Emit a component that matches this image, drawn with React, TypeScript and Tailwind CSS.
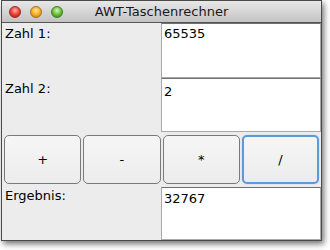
import React from "react";

const font = { fontFamily: '"DejaVu Sans", "Liberation Sans", sans-serif' };

function Light({ cls }: { cls: string }) {
  return <div className={`w-[12px] h-[12px] rounded-full border ${cls}`} />;
}

function Field({ value, pt }: { value: string; pt: string }) {
  return (
    <div
      className={`h-full bg-white border border-[#a9a9a9] border-t-[#707070] pl-[2px] ${pt} text-[13px] leading-[16px] text-black`}
    >
      {value}
    </div>
  );
}

function Btn({ label, focus }: { label: string; focus?: boolean }) {
  return (
    <div className="h-full px-[1px] py-[2px]">
      <div
        className={
          focus
            ? "h-full rounded-[5px] border-2 border-[#5f98dc] bg-gradient-to-b from-[#f6f6f6] to-[#ececec] flex items-center justify-center text-[13px] text-black shadow-[0_0_1px_#8ab4ea]"
            : "h-full rounded-[5px] border border-[#7a7a7a] bg-gradient-to-b from-[#f6f6f6] to-[#ececec] flex items-center justify-center text-[13px] text-black"
        }
      >
        {label}
      </div>
    </div>
  );
}

export default function App() {
  return (
    <div className="w-[330px] h-[250px] bg-white" style={font}>
      <div className="ml-[1px] w-[321px] h-[241px] border border-[#4a4a4a] bg-[#ececec] flex flex-col shadow-[2px_3px_6px_rgba(0,0,0,0.55)]">
        <div className="h-[22px] shrink-0 bg-gradient-to-b from-[#e8e8e8] to-[#c3c3c3] border-b border-[#555] flex items-center relative">
          <div className="flex items-center gap-[9px] pl-[7px]">
            <Light cls="border-[#9c2b22] bg-[radial-gradient(circle_at_50%_35%,#ffb0a4,#e8392d_55%,#a3150d)]" />
            <Light cls="border-[#a7701a] bg-[radial-gradient(circle_at_50%_35%,#ffe39a,#f3aa1f_55%,#b87408)]" />
            <Light cls="border-[#3f7f22] bg-[radial-gradient(circle_at_50%_35%,#d4f7b5,#62bb33_55%,#2f7c12)]" />
          </div>
          <div className="absolute inset-0 flex items-center justify-center pt-[1px] text-[13px] text-[#1a1a1a]">
            AWT-Taschenrechner
          </div>
        </div>
        <div className="flex-1 grid grid-rows-[55px_54px_55px_1fr]">
          <div className="grid grid-cols-[159px_1fr]">
            <div className="pl-[3px] pt-[3px] text-[13px] leading-[16px] text-black">Zahl 1:</div>
            <Field value="65535" pt="pt-[2px]" />
          </div>
          <div className="grid grid-cols-[159px_1fr]">
            <div className="pl-[3px] pt-[3px] text-[13px] leading-[16px] text-black">Zahl 2:</div>
            <Field value="2" pt="pt-[5px]" />
          </div>
          <div className="grid grid-cols-4 px-[1px] py-[1px]">
            <Btn label="+" />
            <Btn label="-" />
            <Btn label="*" />
            <Btn label="/" focus />
          </div>
          <div className="grid grid-cols-[159px_1fr]">
            <div className="pl-[3px] pt-[1px] text-[13px] leading-[16px] text-black">Ergebnis:</div>
            <Field value="32767" pt="pt-[3px]" />
          </div>
        </div>
      </div>
    </div>
  );
}
